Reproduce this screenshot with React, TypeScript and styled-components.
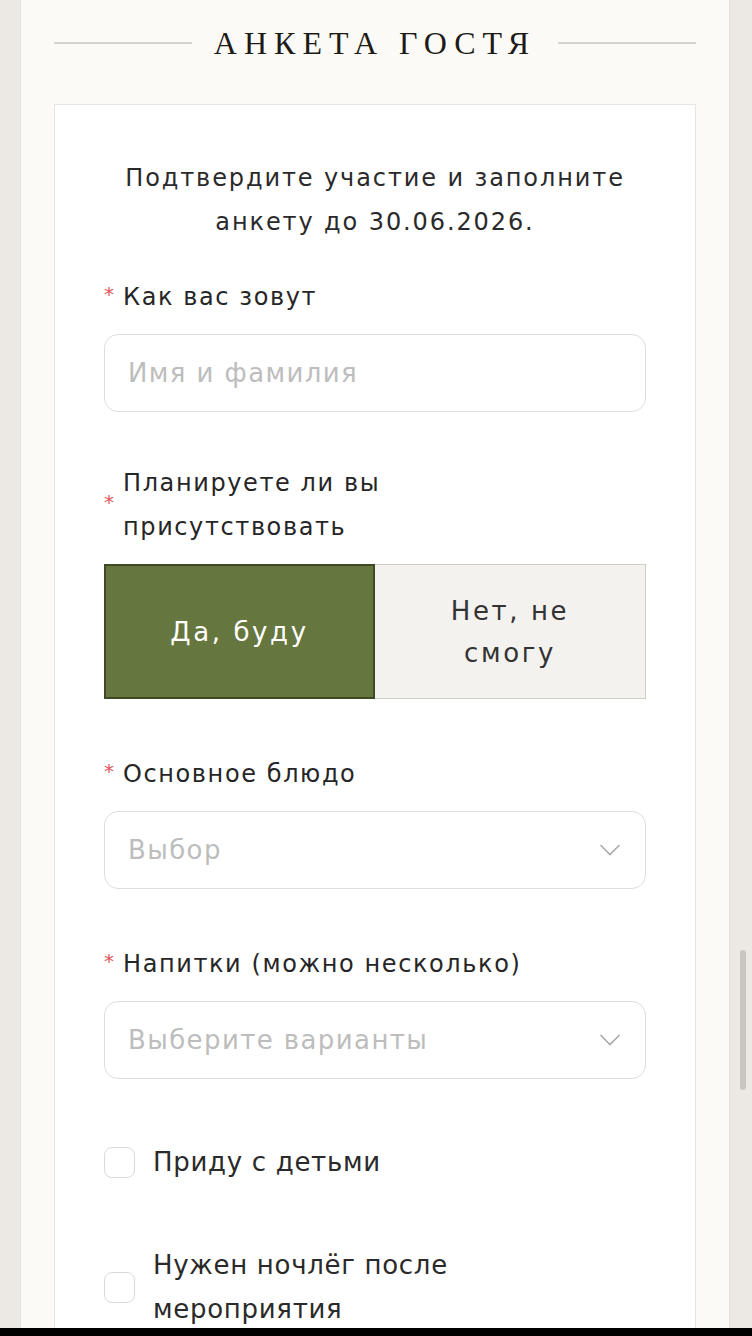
import styled, { createGlobalStyle } from 'styled-components';

const GlobalStyle = createGlobalStyle`
  html, body { margin: 0; padding: 0; background: #ece9e5; }
  * { box-sizing: border-box; }
`;

// --- Page frame ---
const Screen = styled.div`
  width: 752px;
  height: 1336px;
  overflow: hidden;
  display: flex;
  flex-direction: column;
  background: #ece9e5;
`;

const Viewport = styled.div`
  flex: 1;
  display: flex;
  min-height: 0;
`;

const SideStrip = styled.div<{ $w: number }>`
  width: ${({ $w }) => $w}px;
  flex-shrink: 0;
  background: #ece9e5;
  position: relative;
`;

const ScrollThumb = styled.div`
  position: absolute;
  left: 10px;
  top: 950px;
  width: 6px;
  height: 140px;
  border-radius: 3px;
  background: #c9c6c1;
`;

const Panel = styled.main`
  flex: 1;
  background: #fcfaf6;
  padding: 0 33px;
  border-left: 1px solid #e6e2dc;
  border-right: 1px solid #e6e2dc;
`;

const BottomBar = styled.div`
  height: 8px;
  background: #000;
`;

// --- Header ---
const Heading = styled.header`
  display: flex;
  align-items: center;
  gap: 22px;
  height: 86px;
  margin-bottom: 18px;
`;

const Rule = styled.span`
  flex: 1;
  height: 2px;
  background: #d6d2ca;
`;

const Title = styled.h2`
  margin: 0;
  font-family: 'Liberation Serif', 'DejaVu Serif', serif;
  font-weight: 400;
  font-size: 32px;
  letter-spacing: 7px;
  color: #1d1b18;
  white-space: nowrap;
`;

// --- Card & form ---
const Card = styled.section`
  background: #fff;
  border: 1px solid #e8e5e0;
  padding: 51px 49px 0;
  font-family: 'DejaVu Sans', 'Noto Sans', sans-serif;
  color: #262626;
`;

const Intro = styled.p`
  margin: 0 0 31px;
  text-align: center;
  font-size: 24px;
  line-height: 44px;
  letter-spacing: 1.9px;
  color: #2a2a2a;
`;

const Field = styled.div<{ $gap: number }>`
  margin-bottom: ${({ $gap }) => $gap}px;
`;

const Label = styled.div`
  display: flex;
  align-items: center;
  margin-bottom: 15px;
`;

const Star = styled.span`
  width: 19px;
  flex-shrink: 0;
  color: #e0575b;
  font-size: 20px;
  line-height: 44px;
  margin-top: -6px;
`;

const LabelText = styled.span<{ $max?: number }>`
  font-size: 24px;
  line-height: 44px;
  letter-spacing: 1.6px;
  max-width: ${({ $max }) => ($max ? `${$max}px` : 'none')};
`;

const Box = styled.div`
  height: 78px;
  border: 1.5px solid #e0ddd8;
  border-radius: 14px;
  display: flex;
  align-items: center;
  justify-content: space-between;
  padding: 0 24px 0 23px;
`;

const Placeholder = styled.span`
  font-size: 26px;
  letter-spacing: 1.4px;
  color: #bdbdbd;
`;

const Toggle = styled.div`
  display: grid;
  grid-template-columns: 1fr 1fr;
  height: 135px;
`;

const Choice = styled.div<{ $active?: boolean }>`
  display: flex;
  align-items: center;
  justify-content: center;
  text-align: center;
  padding: 0 30px;
  font-size: 26px;
  line-height: 42px;
  letter-spacing: 2.6px;
  background: ${({ $active }) => ($active ? '#66763f' : '#f4f2ee')};
  color: ${({ $active }) => ($active ? '#fff' : '#333')};
  border: ${({ $active }) => ($active ? '2px solid #3f4a25' : '1px solid #cfccc6')};
  border-left-width: ${({ $active }) => ($active ? '2px' : '0')};
`;

const CheckRow = styled.label<{ $gap: number }>`
  display: flex;
  align-items: center;
  gap: 18px;
  margin-top: ${({ $gap }) => $gap}px;
`;

const CheckBox = styled.span`
  width: 31px;
  height: 31px;
  flex-shrink: 0;
  border: 1.5px solid #dddad5;
  border-radius: 8px;
  background: #fff;
`;

const CheckText = styled.span`
  font-size: 26px;
  line-height: 44px;
  letter-spacing: 0.7px;
  color: #2a2a2a;
  max-width: 340px;
`;

const Chevron = () => (
  <svg width="22" height="14" viewBox="0 0 22 14" fill="none">
    <path d="M1.5 2 L11 11.5 L20.5 2" stroke="#ababab" strokeWidth="1.6" />
  </svg>
);

export default function App() {
  return (
    <>
      <GlobalStyle />
      <Screen>
        <Viewport>
          <SideStrip $w={20} />
          <Panel>
            <Heading>
              <Rule />
              <Title>АНКЕТА ГОСТЯ</Title>
              <Rule />
            </Heading>

            <Card>
              <Intro>
                Подтвердите участие и заполните
                <br />
                анкету до 30.06.2026.
              </Intro>

              <Field $gap={49}>
                <Label>
                  <Star>*</Star>
                  <LabelText>Как вас зовут</LabelText>
                </Label>
                <Box>
                  <Placeholder>Имя и фамилия</Placeholder>
                </Box>
              </Field>

              <Field $gap={53}>
                <Label>
                  <Star>*</Star>
                  <LabelText $max={300}>Планируете ли вы присутствовать</LabelText>
                </Label>
                <Toggle>
                  <Choice $active>Да, буду</Choice>
                  <Choice>Нет, не смогу</Choice>
                </Toggle>
              </Field>

              <Field $gap={53}>
                <Label>
                  <Star>*</Star>
                  <LabelText>Основное блюдо</LabelText>
                </Label>
                <Box>
                  <Placeholder>Выбор</Placeholder>
                  <Chevron />
                </Box>
              </Field>

              <Field $gap={0}>
                <Label>
                  <Star>*</Star>
                  <LabelText>Напитки (можно несколько)</LabelText>
                </Label>
                <Box>
                  <Placeholder>Выберите варианты</Placeholder>
                  <Chevron />
                </Box>
              </Field>

              <CheckRow $gap={61}>
                <CheckBox />
                <CheckText>Приду с детьми</CheckText>
              </CheckRow>

              <CheckRow $gap={59}>
                <CheckBox />
                <CheckText>Нужен ночлёг после мероприятия</CheckText>
              </CheckRow>
            </Card>
          </Panel>
          <SideStrip $w={22}>
            <ScrollThumb />
          </SideStrip>
        </Viewport>
        <BottomBar />
      </Screen>
    </>
  );
}
